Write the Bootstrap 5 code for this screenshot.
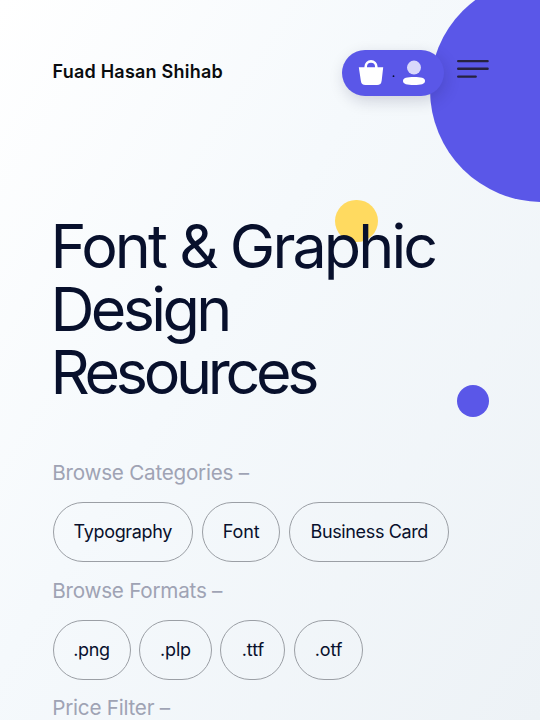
<!DOCTYPE html>
<html lang="en">
<head>
<meta charset="utf-8">
<meta name="viewport" content="width=device-width, initial-scale=1">
<title>Fuad Hasan Shihab</title>
<link href="https://cdn.jsdelivr.net/npm/bootstrap@5.3.0/dist/css/bootstrap.min.css" rel="stylesheet">
<script src="https://cdn.jsdelivr.net/npm/bootstrap@5.3.0/dist/js/bootstrap.bundle.min.js" defer></script>
<style>
:root{--ink:#08102c;--violet:#5a57e8}
body{font-family:Inter,"Liberation Sans",sans-serif;color:var(--ink)}
.page{height:720px;padding:0 51px 0 52.5px;background:linear-gradient(122deg,#fff 0%,#f5f9fc 42%,#edf2f6 100%)}
.blob{position:absolute;border-radius:50%;background:var(--violet)}
.blob-big{width:224px;height:224px;left:429.7px;top:-21.6px}
.blob-sun{width:42.6px;height:42.6px;left:335.2px;top:199.5px;background:#ffda60}
.blob-small{width:32px;height:32px;left:456.8px;top:384.7px}
.topbar{padding-top:50px}
.brand{font-size:18px;font-weight:600;letter-spacing:.22px;color:#0a0c0e;line-height:44px}
.actions{width:102px;height:46px;margin-right:13px;background:var(--violet);box-shadow:2px 5px 15px rgba(20,20,60,.17)}
.menu-btn{width:32px;height:38px;border:0;background:none}
.headline{font-size:61px;font-weight:430;line-height:62.7px;margin:119.2px 0 0 -2px;letter-spacing:-2.92px}
.headline span{display:block;white-space:nowrap}
.headline .line-b{letter-spacing:-3.65px}
.headline .line-c{letter-spacing:-4.3px}
.groups{margin-top:55.6px}
.group-label{font-size:20.7px;line-height:28px;color:#9fa3b4;font-weight:400;letter-spacing:-.26px;margin:0 0 15.3px -.2px}
.pills{gap:8.8px;margin-bottom:14.4px}
.pill{height:60px;padding-bottom:1px;border:1px solid #9b9fa5;color:var(--ink);font-size:18px;letter-spacing:-.15px;white-space:nowrap}
.pill-typo{width:140.6px;letter-spacing:-.35px}
.pill-font{width:78.4px}
.pill-card{width:160.4px;letter-spacing:-.36px}
.pill-png{width:78px;letter-spacing:-.3px}
.pill-plp{width:72.4px}
.pill-ttf{width:64.8px}
.pill-otf{width:69px}
</style>
</head>
<body>
<main class="page position-relative overflow-hidden">
  <div class="blob blob-big"></div>
  <div class="blob blob-sun"></div>
  <div class="blob blob-small"></div>

  <header class="topbar position-relative d-flex align-items-start">
    <div class="brand me-auto">Fuad Hasan Shihab</div>
    <div class="actions rounded-pill">
      <svg width="102" height="46" viewBox="0 0 102 46" class="d-block" aria-hidden="true">
        <path d="M16.8 17.2h24.4l-1.5 13.2q-.5 4.6-4.6 4.6H23.4q-4.1 0-4.6-4.6z" fill="#fff"/>
        <path d="M23.7 19v-2.3a5.3 5.3 0 0 1 10.6 0V19" fill="none" stroke="#fff" stroke-width="2.6"/>
        <circle cx="51.5" cy="26.2" r=".9" fill="#08102c"/>
        <circle cx="72" cy="17.6" r="7" fill="#d9d8fb"/>
        <path d="M61 31c0-3 4-3.900 11-3.900s11 .9 11 3.900-4 4-11 4-11-1-11-4z" fill="#fff"/>
      </svg>
    </div>
    <button class="menu-btn p-0" aria-label="Menu">
      <svg width="32" height="38" viewBox="0 0 32 38" class="d-block"><path d="M1.200 11.100h29.400M1.200 18.800h29.400M1.200 26.600h17.500" stroke="#26223f" stroke-width="2.400" stroke-linecap="round"/></svg>
    </button>
  </header>

  <h1 class="headline position-relative">
    <span>Font &amp; Graphic</span>
    <span class="line-b">Design</span>
    <span class="line-c">Resources</span>
  </h1>

  <section class="groups">
    <h2 class="group-label">Browse Categories –</h2>
    <div class="pills d-flex">
      <a class="pill pill-typo rounded-pill d-flex align-items-center justify-content-center text-decoration-none">Typography</a>
      <a class="pill pill-font rounded-pill d-flex align-items-center justify-content-center text-decoration-none">Font</a>
      <a class="pill pill-card rounded-pill d-flex align-items-center justify-content-center text-decoration-none">Business Card</a>
    </div>
    <h2 class="group-label">Browse Formats –</h2>
    <div class="pills d-flex">
      <a class="pill pill-png rounded-pill d-flex align-items-center justify-content-center text-decoration-none">.png</a>
      <a class="pill pill-plp rounded-pill d-flex align-items-center justify-content-center text-decoration-none">.plp</a>
      <a class="pill pill-ttf rounded-pill d-flex align-items-center justify-content-center text-decoration-none">.ttf</a>
      <a class="pill pill-otf rounded-pill d-flex align-items-center justify-content-center text-decoration-none">.otf</a>
    </div>
    <h2 class="group-label">Price Filter –</h2>
  </section>
</main>
</body>
</html>
